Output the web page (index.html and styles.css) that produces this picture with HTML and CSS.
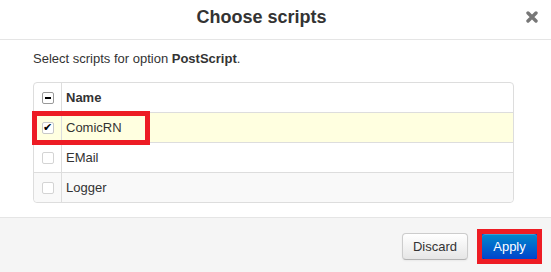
FILE: index.html
```html
<!DOCTYPE html>
<html lang="en">
<head>
    <meta charset="UTF-8">
    <meta name="viewport" content="width=device-width, initial-scale=1.0">
    <title>Choose scripts</title>
    <link rel="stylesheet" href="styles.css">
</head>
<body>
    <div class="dialog">
        <div class="dialog-header">
            <h3 class="dialog-title">Choose scripts</h3>
            <span class="close-btn" title="Close">
                <svg width="12" height="12" viewBox="0 0 12 12">
                    <path d="M2 2 L10 10 M10 2 L2 10" stroke="#777" stroke-width="3.4" stroke-linecap="round"/>
                </svg>
            </span>
        </div>

        <div class="dialog-body">
            <p class="hint">Select scripts for option <b>PostScript</b>.</p>

            <div class="grid">
                <div class="grid-row grid-head">
                    <div class="cell-check"><span class="box box-partial"></span></div>
                    <div class="cell-name">Name</div>
                </div>
                <div class="grid-row row-selected">
                    <div class="cell-check"><span class="box box-checked">&#10004;</span></div>
                    <div class="cell-name">ComicRN</div>
                </div>
                <div class="grid-row">
                    <div class="cell-check"><span class="box"></span></div>
                    <div class="cell-name">EMail</div>
                </div>
                <div class="grid-row row-alt">
                    <div class="cell-check"><span class="box"></span></div>
                    <div class="cell-name">Logger</div>
                </div>
                <span class="mark mark-row"></span>
            </div>
        </div>

        <div class="dialog-footer">
            <button type="button" class="btn">Discard</button>
            <button type="button" class="btn btn-primary marked">Apply</button>
        </div>
    </div>
</body>
</html>
```

FILE: styles.css
```css
body {
    margin: 0;
    background: #fff;
    font-family: "Liberation Sans", Arial, sans-serif;
    font-size: 13px;
    color: #333;
}

.dialog {
    width: 551px;
}

.dialog-header {
    display: flex;
    height: 39px;
    border-bottom: 1px solid #e5e5e5;
}

.dialog-title {
    flex: 1;
    margin: 0;
    padding-top: 7px;
    text-align: center;
    font-size: 18px;
    line-height: 20px;
    font-weight: bold;
    color: #333;
}

.close-btn {
    width: 25px;
    padding-left: 3px;
    padding-top: 11px;
    cursor: pointer;
}

.close-btn svg {
    display: block;
}

.dialog-body {
    padding: 10px 37px 14px 33px;
}

.hint {
    margin: 0 0 14px;
    line-height: 18px;
}

.grid {
    position: relative;
    border: 1px solid #ddd;
    border-radius: 4px;
}

.grid-row {
    display: flex;
    height: 29px;
    align-items: center;
    border-top: 1px solid #ddd;
}

.grid-row:first-child {
    border-top: none;
    border-radius: 4px 4px 0 0;
}

.grid-row:nth-child(4) {
    border-radius: 0 0 4px 4px;
}

.grid-head .cell-name {
    font-weight: bold;
}

.row-selected {
    background: #ffffe0;
}

.row-alt {
    background: #f9f9f9;
}

.cell-check {
    width: 27px;
    height: 100%;
    display: flex;
    align-items: center;
    justify-content: center;
    border-right: 1px solid #ddd;
}

.cell-name {
    padding-left: 4px;
}

.box {
    box-sizing: border-box;
    width: 12px;
    height: 12px;
    border: 1px solid #d4d4d4;
    border-radius: 2px;
    background: #fff;
    display: flex;
    align-items: center;
    justify-content: center;
    font-size: 11px;
    line-height: 1;
    color: #000;
}

.box-partial {
    border-color: #999;
}

.box-partial::after {
    content: "";
    width: 6px;
    height: 2px;
    background: #000;
}

.box-checked {
    border-color: #c8c8c8;
}

/* red annotation boxes */
.mark {
    position: absolute;
    box-sizing: border-box;
    border: 5px solid #ed1c24;
}

.mark-row {
    left: -2px;
    top: 28px;
    width: 118px;
    height: 34px;
}

.dialog-footer {
    display: flex;
    justify-content: flex-end;
    gap: 13px;
    padding: 15px 13px 12px;
    background: #f5f5f5;
    border-top: 1px solid #e5e5e5;
    height: 27px;
}

.btn {
    box-sizing: border-box;
    height: 27px;
    padding: 0 10px;
    font-family: inherit;
    font-size: 13px;
    line-height: 25px;
    color: #333;
    background: linear-gradient(#ffffff, #e6e6e6);
    border: 1px solid #ccc;
    border-bottom-color: #b3b3b3;
    border-radius: 4px;
    box-shadow: inset 0 1px 0 rgba(255, 255, 255, 0.2), 0 1px 2px rgba(0, 0, 0, 0.05);
    cursor: pointer;
}

.btn-primary {
    width: 57px;
    color: #fff;
    background: linear-gradient(#0088cc, #0044cc);
    border-color: #0044cc #0044cc #002a80;
}

.marked {
    position: relative;
}

.marked::after {
    content: "";
    position: absolute;
    top: -5px;
    left: -5px;
    right: -5px;
    bottom: -5px;
    border: 5px solid #ed1c24;
}
```
